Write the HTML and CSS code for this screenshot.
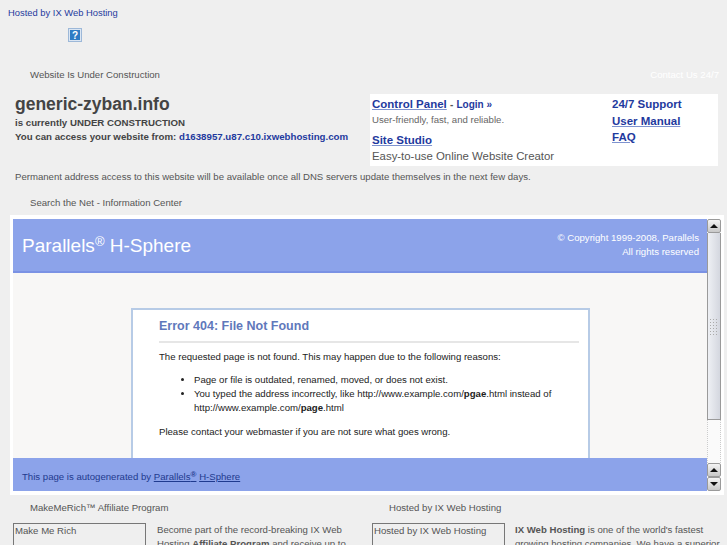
FILE: index.html
```html
<!DOCTYPE html>
<html lang="en">
<head>
<meta charset="utf-8">
<title>generic-zyban.info</title>
<link rel="stylesheet" href="styles.css">
</head>
<body>
<div class="page">
  <a class="host-link" href="#">Hosted by IX Web Hosting</a>
  <div class="help-row">
    <svg class="help-icon" width="14" height="14" viewBox="0 0 14 14"><rect x="0.5" y="0.5" width="13" height="13" fill="#dbe6f3" stroke="#9db8d8"/><rect x="2" y="2" width="10" height="10" fill="#2f7cc4"/><text x="7" y="10.5" text-anchor="middle" class="help-mark">?</text></svg>
  </div>
  <div class="title-row">
    <span class="section-title">Website Is Under Construction</span>
    <span class="contact">Contact Us 24/7</span>
  </div>
  <div class="info-row">
    <div class="site-info">
      <h1 class="domain">generic-zyban.info</h1>
      <p class="status">is currently UNDER CONSTRUCTION</p>
      <p class="status">You can access your website from: <a class="temp-link" href="#">d1638957.u87.c10.ixwebhosting.com</a></p>
    </div>
    <div class="panel">
      <div class="panel-left">
        <p class="panel-head"><a href="#">Control Panel</a> <span class="dash">-</span> <span class="login">Login »</span></p>
        <p class="panel-small">User-friendly, fast, and reliable.</p>
        <p class="panel-head studio"><a href="#">Site Studio</a></p>
        <p class="panel-big">Easy-to-use Online Website Creator</p>
      </div>
      <div class="panel-right">
        <span class="support">24/7 Support</span>
        <a href="#">User Manual</a>
        <a href="#">FAQ</a>
      </div>
    </div>
  </div>
  <p class="permanent">Permanent address access to this website will be available once all DNS servers update themselves in the next few days.</p>
  <div class="section-title search-title">Search the Net - Information Center</div>
  <div class="frame">
    <div class="frame-main">
      <header class="frame-head">
        <div class="brand">Parallels<sup>®</sup> H-Sphere</div>
        <div class="copy">© Copyright 1999-2008, Parallels<br>All rights reserved</div>
      </header>
      <div class="frame-body">
        <div class="error-box">
          <h2 class="error-title">Error 404: File Not Found</h2>
          <p>The requested page is not found. This may happen due to the following reasons:</p>
          <ul>
            <li>Page or file is outdated, renamed, moved, or does not exist.</li>
            <li>You typed the address incorrectly, like http://www.example.com/<b>pgae</b>.html instead of http://www.example.com/<b>page</b>.html</li>
          </ul>
          <p>Please contact your webmaster if you are not sure what goes wrong.</p>
        </div>
      </div>
      <footer class="frame-foot">This page is autogenerated by <a href="#">Parallels<sup>®</sup></a> <a href="#">H-Sphere</a></footer>
    </div>
    <div class="scroll-col">
      <div class="sbar tall">
        <div class="sbtn"><i class="up"></i></div>
        <div class="strack"><div class="thumb"><div class="grip"></div></div><div class="dots"></div></div>
        <div class="sbtn"><i class="up"></i></div>
        <div class="sbtn"><i class="down"></i></div>
      </div>
    </div>
  </div>
  <div class="promos">
    <section class="promo">
      <div class="section-title">MakeMeRich™ Affiliate Program</div>
      <div class="promo-row">
        <div class="ad-box">Make Me Rich</div>
        <p class="promo-text">Become part of the record-breaking IX Web Hosting <b>Affiliate Program</b> and receive up to</p>
      </div>
    </section>
    <section class="promo">
      <div class="section-title">Hosted by IX Web Hosting</div>
      <div class="promo-row">
        <div class="ad-box">Hosted by IX Web Hosting</div>
        <p class="promo-text"><b>IX Web Hosting</b> is one of the world's fastest growing hosting companies. We have a superior</p>
      </div>
    </section>
  </div>
</div>
</body>
</html>
```
FILE: styles.css
```css
* { box-sizing: border-box; }
html, body { margin: 0; height: 100%; overflow: hidden; }
body { background: #efefef; color: #555; font: 9.6px/14px "Liberation Sans", Arial, sans-serif; }
p, h1, h2, ul { margin: 0; padding: 0; }
.page { width: 727px; height: 545px; overflow: hidden; display: flex; flex-direction: column; }
.page > * { flex: none; }
.host-link { color: #1f3a9e; text-decoration: none; margin: 6px 0 0 8px; height: 14px; font-size: 9.4px; }
.help-row { height: 14px; margin: 8px 0 0 68px; }
.help-icon { display: block; }
.help-mark { font: bold 10px "Liberation Sans", Arial, sans-serif; fill: #fff; }
.title-row { display: flex; justify-content: space-between; margin-top: 26px; padding: 0 8px 0 30px; height: 14px; }
.section-title { color: #555; }
.contact { color: #fff; }
.info-row { display: flex; justify-content: space-between; margin-top: 12px; padding: 0 9px 0 15px; height: 72px; }
.domain { font-size: 17.5px; line-height: 21px; margin-bottom: 1px; color: #444; }
.status { font-size: 9.7px; font-weight: bold; color: #444; line-height: 14px; }
.temp-link { color: #1f3a9e; text-decoration: none; }
.panel { width: 348px; background: #fff; display: flex; padding: 2px 0 0 2px; }
.panel-left { width: 240px; }
.panel-head { font-size: 11.5px; font-weight: bold; line-height: 16px; color: #1f3a9e; }
.panel-head a, .panel-right a { color: #1f3a9e; text-decoration: underline; text-decoration-color: #7f93cf; }
.dash { font-size: 10px; color: #555; }
.login { font-size: 10px; }
.panel-small { color: #666; line-height: 14px; height: 19px; }
.panel-big { font-size: 11.4px; color: #555; line-height: 17px; }
.panel-right { display: flex; flex-direction: column; font-size: 11.5px; font-weight: bold; color: #1f3a9e; line-height: 16.5px; }
.permanent { margin: 4px 0 0 15px; height: 14px; color: #555; }
.search-title { margin: 12px 0 0 30px; height: 14px; }
.frame { display: flex; width: 714px; height: 280px; margin: 5px 0 0 10px; background: #fff; padding: 4px 3px; }
.frame-main { width: 694px; height: 272px; display: flex; flex-direction: column; }
.frame-head { flex: none; height: 54px; background: #8ca3ea; border-bottom: 2px solid #7b92e4; color: #fff; display: flex; justify-content: space-between; padding: 0 8px 0 9px; }
.brand { font-size: 19px; line-height: 22px; margin-top: 16px; }
.brand sup { font-size: 13px; line-height: 0; vertical-align: 6px; }
.copy { text-align: right; line-height: 14px; margin-top: 12px; }
.frame-body { flex: 1; min-height: 0; background: #f8f7f6; overflow: hidden; padding: 35px 0 0 118px; }
.error-box { width: 459px; height: 200px; background: #fff; border: 2px solid #b7cbe6; border-bottom: 0; padding: 8px 9px 0 26px; color: #222; }
.error-title { font-size: 12.5px; line-height: 16px; color: #5f78bb; border-bottom: 2px solid #e6e6e6; padding-bottom: 7px; margin-bottom: 7px; }
.error-box ul { list-style: disc; margin: 9px 0 10px 35px; }
.frame-foot { height: 33px; background: #8ca3ea; color: #1f3a8e; padding: 12px 0 0 9px; line-height: 14px; flex: none; }
.frame-foot a { color: #1f3a8e; }
.frame-foot sup { font-size: 8px; line-height: 0; vertical-align: 3px; font-weight: bold; }
.scroll-col { width: 14px; height: 272px; }
.sbar { height: 100%; display: flex; flex-direction: column; }
.sbtn { height: 14px; flex: none; background: linear-gradient(#f4f4f4, #c8c8c8); border: 1px solid #9a9a9a; border-radius: 2px; display: flex; align-items: center; justify-content: center; }
.sbtn i { width: 0; height: 0; border-left: 4px solid transparent; border-right: 4px solid transparent; }
.sbtn .up { border-bottom: 4px solid #111; }
.sbtn .down { border-top: 4px solid #111; }
.strack { flex: 1; min-height: 0; display: flex; flex-direction: column; background: #fafafa; }
.thumb { flex: none; height: 187px; background: linear-gradient(90deg, #eef0f4, #d4d7df); border: 1px solid #9a9a9a; border-top: 0; display: flex; flex-direction: column; justify-content: flex-end; }
.grip { height: 18px; margin: 0 1px 83px; background-image: radial-gradient(#aaa 0.6px, transparent 0.7px); background-size: 3px 3px; }
.dots { flex: 1; border-left: 1px dotted #ccc; border-right: 1px dotted #ccc; }
.promos { display: flex; margin-top: 6px; }
.promo { width: 359px; padding-left: 13px; flex: none; }
.promo + .promo { width: 368px; }
.promo .section-title { margin-left: 17px; height: 14px; }
.promo-row { display: flex; gap: 11px; margin-top: 8px; }
.promo + .promo .promo-row { gap: 10px; }
.ad-box { width: 133px; height: 60px; flex: none; border: 1px solid #777; padding: 1px 1px 0; line-height: 12px; color: #555; }
.promo-text { width: 200px; flex: none; line-height: 14px; color: #555; }
.promo + .promo .promo-text { width: 206px; }
```
